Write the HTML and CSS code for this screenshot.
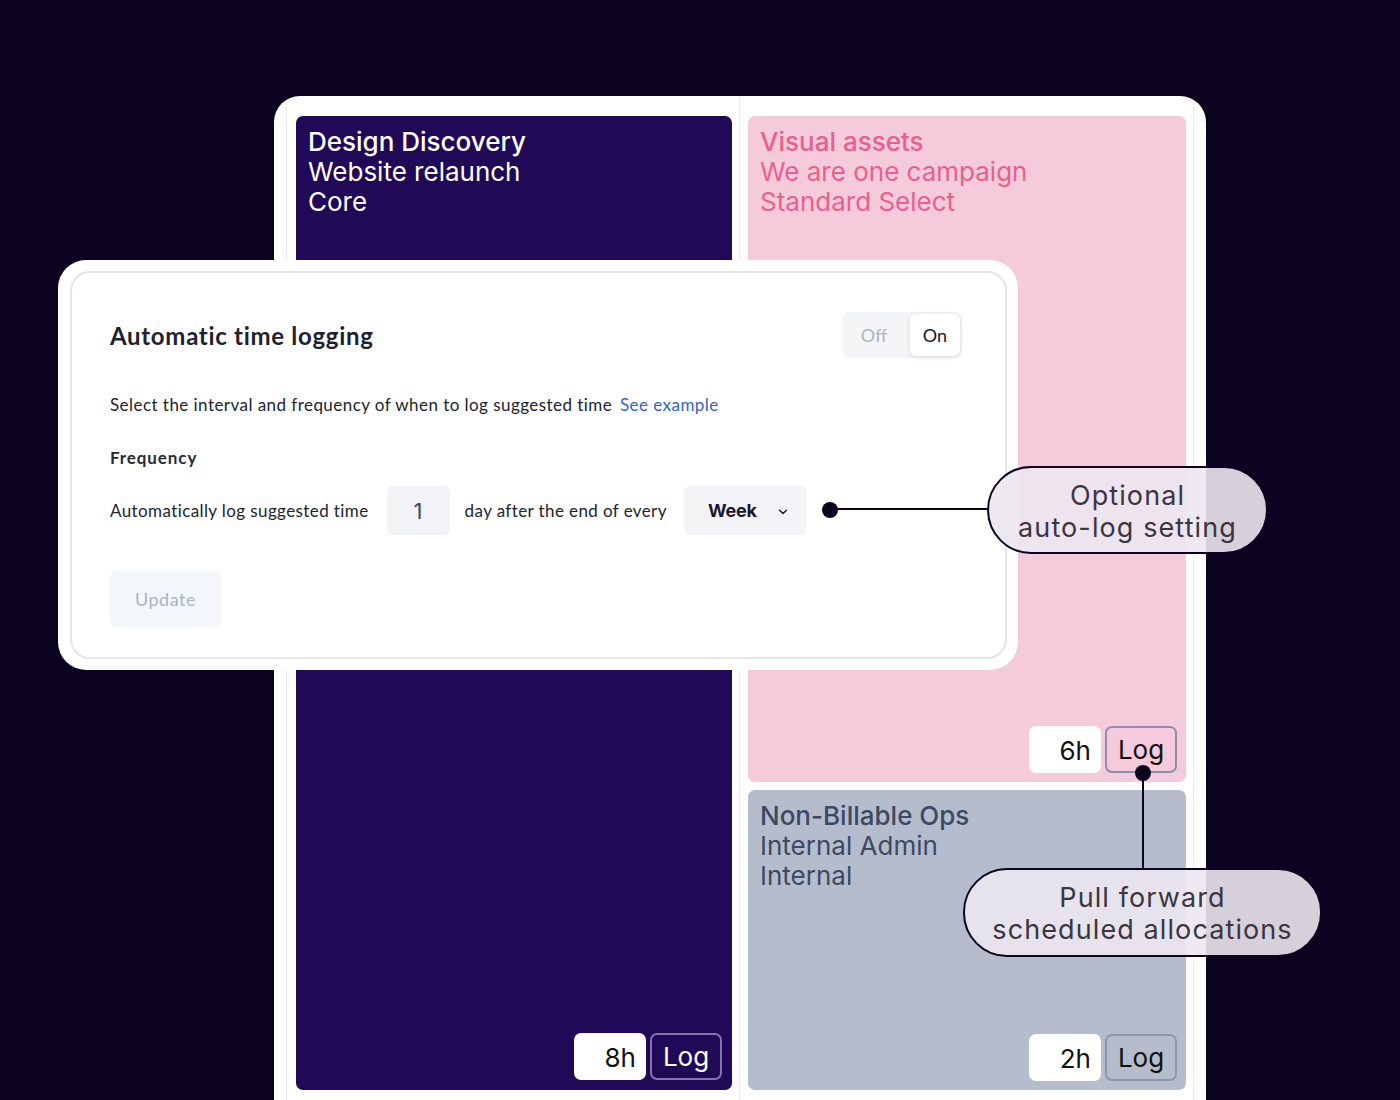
FILE: index.html
```html
<!DOCTYPE html>
<html lang="en">
<head>
<meta charset="utf-8">
<title>Automatic time logging</title>
<link rel="stylesheet" href="styles.css">
</head>
<body>
<div class="stage">
  <div class="frame">
    <div class="grid">
      <div class="col col-left">
        <div class="card card-dark">
          <div class="card-text">
            <div class="t-main">Design Discovery</div>
            <div>Website relaunch</div>
            <div>Core</div>
          </div>
          <div class="log-row">
            <span class="hours">8h</span>
            <span class="log-btn">Log</span>
          </div>
        </div>
      </div>
      <div class="col col-right">
        <div class="card card-pink">
          <div class="card-text">
            <div class="t-main">Visual assets</div>
            <div>We are one campaign</div>
            <div>Standard Select</div>
          </div>
          <div class="log-row">
            <span class="hours">6h</span>
            <span class="log-btn">Log</span>
          </div>
        </div>
        <div class="card card-grey">
          <div class="card-text">
            <div class="t-main">Non-Billable Ops</div>
            <div>Internal Admin</div>
            <div>Internal</div>
          </div>
          <div class="log-row">
            <span class="hours">2h</span>
            <span class="log-btn">Log</span>
          </div>
        </div>
      </div>
    </div>
  </div>

  <div class="modal">
    <div class="modal-inner">
      <div class="modal-head">
        <h2 class="modal-title">Automatic time logging</h2>
        <div class="toggle">
          <span class="toggle-off">Off</span>
          <span class="toggle-on">On</span>
        </div>
      </div>
      <p class="modal-desc">Select the interval and frequency of when to log suggested time <a class="link">See example</a></p>
      <div class="freq-label">Frequency</div>
      <div class="freq-row">
        <span>Automatically log suggested time</span>
        <span class="num-box">1</span>
        <span>day after the end of every</span>
        <span class="select-box">Week
          <svg class="chev" width="10" height="6" viewBox="0 0 10 6"><path d="M1.5 1.2 L5 4.6 L8.5 1.2" fill="none" stroke="#1a1530" stroke-width="1.4" stroke-linecap="round" stroke-linejoin="round"/></svg>
        </span>
      </div>
      <div class="update-btn">Update</div>
    </div>
  </div>

  <div class="dot dot-1"></div>
  <div class="wire wire-1"></div>
  <div class="callout callout-1">Optional<br>auto-log setting</div>

  <div class="dot dot-2"></div>
  <div class="wire wire-2"></div>
  <div class="callout callout-2">Pull forward<br>scheduled allocations</div>
</div>
</body>
</html>
```

FILE: styles.css
```css
html, body {
  margin: 0;
  padding: 0;
  height: 1100px;
  overflow: hidden;
  background: #0b0320;
}

.stage {
  position: relative;
  width: 1400px;
  height: 1100px;
  padding: 96px 0 0 274px;
  box-sizing: border-box;
}

.frame {
  width: 932px;
  height: 1004px;
  background: #ffffff;
  border-radius: 26px 26px 0 0;
  padding: 0 12px;
  box-sizing: border-box;
  overflow: hidden;
}

.grid {
  display: grid;
  grid-template-columns: 453px 453px;
  height: 100%;
  border-left: 1px solid #ececf0;
  border-right: 1px solid #ececf0;
}

.col {
  box-sizing: border-box;
  padding-top: 20px;
  display: flex;
  flex-direction: column;
  gap: 8px;
}

.col-left {
  border-right: 1px solid #ececf0;
  padding-left: 9px;
  padding-right: 7px;
}

.col-right {
  padding-left: 8px;
  padding-right: 7px;
}

.card {
  border-radius: 7px;
  box-sizing: border-box;
  padding: 11px 9px 9px 12px;
  display: flex;
  flex-direction: column;
  font-family: Inter, "Liberation Sans", sans-serif;
  font-size: 26px;
  line-height: 30px;
}

.card-dark {
  height: 974px;
  background: #200a58;
  color: #ffffff;
  padding-right: 10px;
  padding-bottom: 10px;
}

.card-pink {
  height: 666px;
  background: #f5cadb;
  color: #e8618d;
}

.card-grey {
  height: 300px;
  background: #b5bdcc;
  color: #3b4965;
}

.t-main {
  font-weight: 500;
}

.log-row {
  margin-top: auto;
  align-self: flex-end;
  display: flex;
  gap: 4px;
}

.hours {
  width: 72px;
  height: 47px;
  box-sizing: border-box;
  background: #ffffff;
  border-radius: 7px;
  color: #111111;
  text-align: right;
  padding-right: 10px;
  line-height: 49px;
  font-size: 26px;
}

.log-btn {
  width: 72px;
  height: 47px;
  box-sizing: border-box;
  border: 2px solid #8d8fb0;
  border-radius: 7px;
  text-align: center;
  line-height: 43px;
  font-size: 26px;
  color: #111111;
}

.card-dark .log-btn {
  border-color: #7f76ad;
  color: #ffffff;
}

.card-grey .log-btn {
  border-color: #8d96ae;
}

/* Modal */
.modal {
  position: absolute;
  left: 58px;
  top: 260px;
  width: 960px;
  height: 410px;
  background: #ffffff;
  border-radius: 28px;
  padding: 11px 11px 11px 12px;
  box-sizing: border-box;
  font-family: Lato, "Open Sans", sans-serif;
  color: #1f2330;
}

.modal-inner {
  height: 100%;
  box-sizing: border-box;
  border: 2px solid #e4e4e9;
  border-radius: 20px;
  padding: 39px 43px 0 38px;
}

.modal-head {
  display: flex;
  align-items: center;
  justify-content: space-between;
  height: 46px;
}

.modal-title {
  margin: 0;
  font-size: 24px;
  font-weight: 700;
  letter-spacing: 0.7px;
  color: #1e2230;
}

.toggle {
  display: flex;
  align-items: center;
  width: 120px;
  height: 46px;
  box-sizing: border-box;
  background: #f4f5f7;
  border-radius: 8px;
  padding: 2px 2px 2px 0;
  font-size: 18px;
}

.toggle-off {
  flex: 1;
  text-align: center;
  color: #b0b3bd;
  padding-right: 4px;
}

.toggle-on {
  width: 50px;
  height: 42px;
  line-height: 42px;
  text-align: center;
  background: #ffffff;
  border-radius: 6px;
  box-shadow: 0 1px 5px rgba(20, 20, 40, 0.12);
  color: #141826;
}

.modal-desc {
  margin: 35px 0 0;
  font-size: 17px;
  line-height: 24px;
  letter-spacing: 0.45px;
  color: #20242f;
}

.link {
  margin-left: 3px;
  color: #3561d8;
}

.freq-label {
  margin-top: 29px;
  font-size: 17px;
  line-height: 24px;
  font-weight: 700;
  letter-spacing: 0.9px;
  color: #262a36;
}

.freq-row {
  margin-top: 16px;
  display: flex;
  align-items: center;
  height: 49px;
  font-size: 17px;
  letter-spacing: 0.4px;
  color: #20242f;
}

.num-box {
  width: 63px;
  height: 49px;
  margin: 0 15px 0 18px;
  background: #f2f3f6;
  border-radius: 6px;
  text-align: center;
  line-height: 51px;
  font-family: Inter, "Liberation Sans", sans-serif;
  font-size: 22px;
  color: #3b4965;
  letter-spacing: 0;
}

.select-box {
  margin-left: 17px;
  width: 123px;
  height: 49px;
  box-sizing: border-box;
  background: #f4f4f7;
  border-radius: 6px;
  padding-left: 24px;
  display: flex;
  align-items: center;
  font-family: Inter, "Liberation Sans", sans-serif;
  font-weight: 700;
  font-size: 18px;
  letter-spacing: -0.2px;
  color: #1a1530;
}

.chev {
  margin-left: 21px;
  margin-top: 3px;
}

.update-btn {
  margin-top: 36px;
  width: 111px;
  height: 56px;
  line-height: 56px;
  text-align: center;
  background: #f3f7fc;
  border-radius: 6px;
  font-size: 18px;
  letter-spacing: 0.5px;
  color: #a8b3c4;
}

/* Annotations */
.dot {
  position: absolute;
  width: 16px;
  height: 16px;
  border-radius: 50%;
  background: #0b0320;
}

.dot-1 { left: 822px; top: 502px; }
.dot-2 { left: 1135px; top: 765px; }

.wire {
  position: absolute;
  background: #0b0320;
}

.wire-1 { left: 830px; top: 508px; width: 160px; height: 2px; }
.wire-2 { left: 1142px; top: 773px; width: 2px; height: 97px; }

.callout {
  position: absolute;
  box-sizing: border-box;
  border: 2px solid #0b0320;
  background: rgba(236, 231, 239, 0.9);
  display: flex;
  align-items: center;
  justify-content: center;
  text-align: center;
  padding-top: 3px;
  font-family: Inter, "Liberation Sans", sans-serif;
  font-size: 27px;
  line-height: 32px;
  letter-spacing: 1.1px;
  color: #3a3640;
}

.callout-1 {
  left: 987px;
  top: 466px;
  width: 281px;
  height: 88px;
  border-radius: 44px;
}

.callout-2 {
  left: 963px;
  top: 868px;
  width: 359px;
  height: 89px;
  border-radius: 44px;
}
```
